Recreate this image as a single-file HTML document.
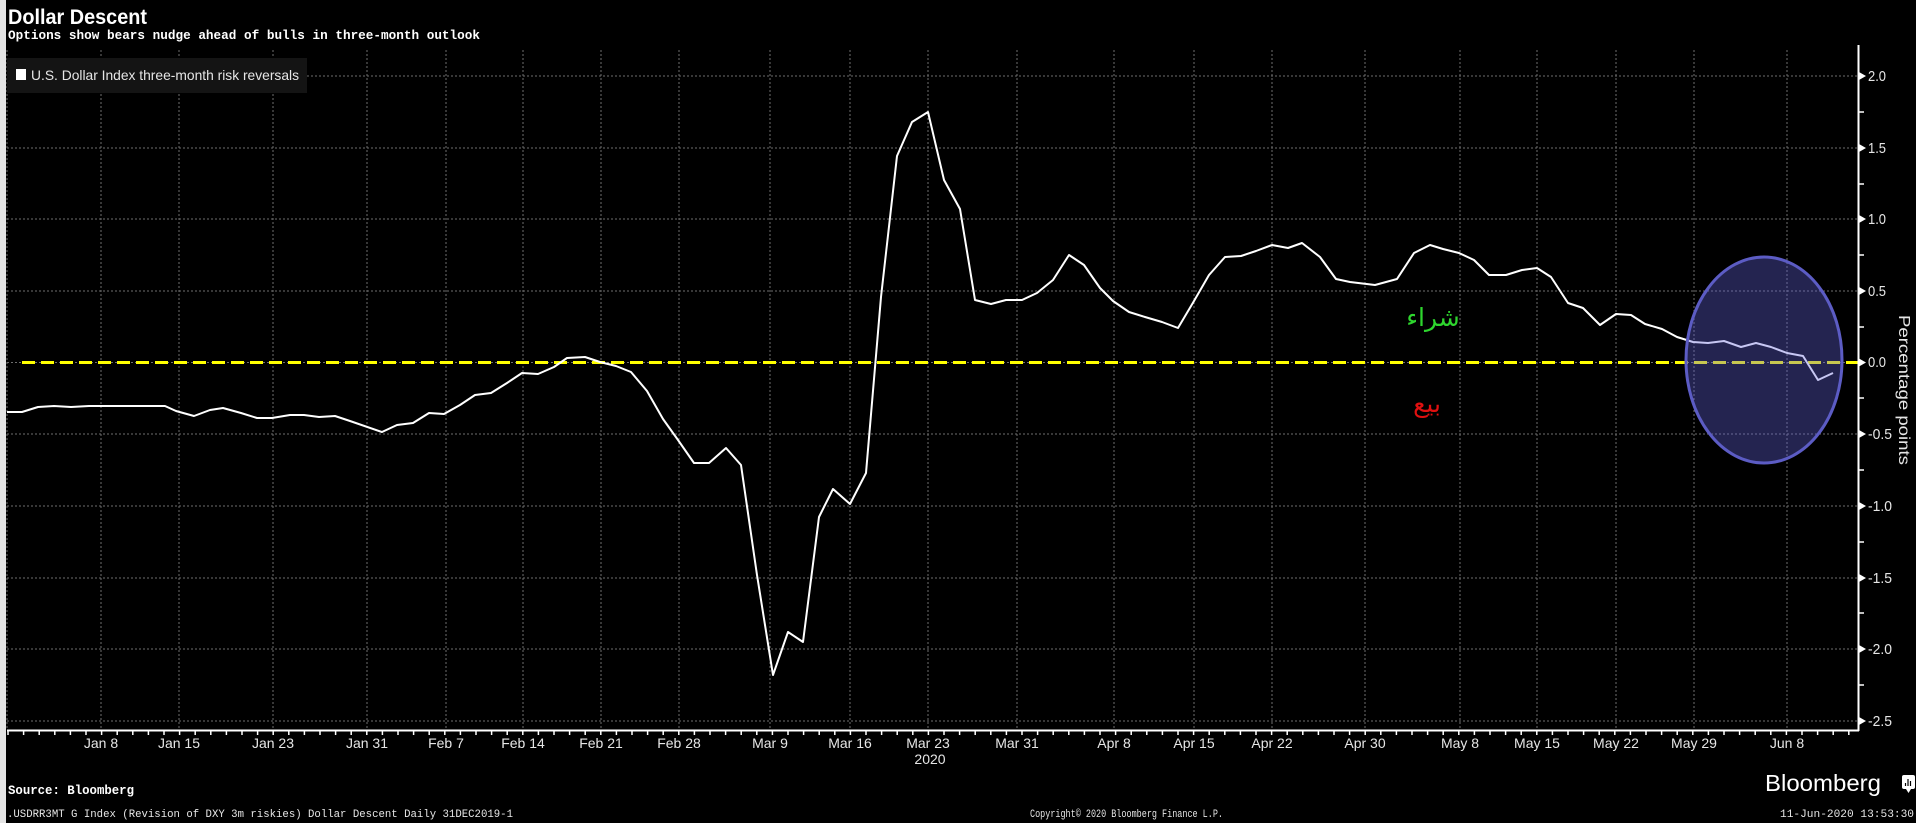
<!DOCTYPE html>
<html><head><meta charset="utf-8"><style>
html,body{margin:0;padding:0;background:#000;}
body{width:1916px;height:823px;overflow:hidden;position:relative;}
svg{position:absolute;left:0;top:0;}
.t{font-family:"Liberation Sans Narrow","Liberation Sans",sans-serif;fill:#e6e6e6;}
</style></head><body>
<svg width="1916" height="823" viewBox="0 0 1916 823" xmlns="http://www.w3.org/2000/svg">
<rect x="0" y="0" width="1916" height="823" fill="#000"/>
<rect x="0" y="0" width="6" height="823" fill="#e4e4e4"/>
<text x="8" y="24" font-family="Liberation Sans, sans-serif" font-weight="bold" font-size="21" fill="#fff" textLength="139" lengthAdjust="spacingAndGlyphs">Dollar Descent</text>
<text x="8" y="39" font-family="Liberation Mono, monospace" font-weight="bold" font-size="13" fill="#fff" textLength="472" lengthAdjust="spacingAndGlyphs">Options show bears nudge ahead of bulls in three-month outlook</text>
<g stroke="#6e6e6e" stroke-width="1" stroke-dasharray="2,2" fill="none">
<line x1="7" y1="50" x2="7" y2="730"/>
<line x1="101" y1="50" x2="101" y2="730"/><line x1="179" y1="50" x2="179" y2="730"/><line x1="273" y1="50" x2="273" y2="730"/><line x1="367" y1="50" x2="367" y2="730"/><line x1="446" y1="50" x2="446" y2="730"/><line x1="523" y1="50" x2="523" y2="730"/><line x1="601" y1="50" x2="601" y2="730"/><line x1="679" y1="50" x2="679" y2="730"/><line x1="770" y1="50" x2="770" y2="730"/><line x1="850" y1="50" x2="850" y2="730"/><line x1="928" y1="50" x2="928" y2="730"/><line x1="1017" y1="50" x2="1017" y2="730"/><line x1="1114" y1="50" x2="1114" y2="730"/><line x1="1194" y1="50" x2="1194" y2="730"/><line x1="1272" y1="50" x2="1272" y2="730"/><line x1="1365" y1="50" x2="1365" y2="730"/><line x1="1460" y1="50" x2="1460" y2="730"/><line x1="1537" y1="50" x2="1537" y2="730"/><line x1="1616" y1="50" x2="1616" y2="730"/><line x1="1694" y1="50" x2="1694" y2="730"/><line x1="1787" y1="50" x2="1787" y2="730"/>
<line x1="7" y1="76" x2="1858" y2="76"/><line x1="7" y1="148" x2="1858" y2="148"/><line x1="7" y1="219" x2="1858" y2="219"/><line x1="7" y1="291" x2="1858" y2="291"/><line x1="7" y1="434" x2="1858" y2="434"/><line x1="7" y1="506" x2="1858" y2="506"/><line x1="7" y1="578" x2="1858" y2="578"/><line x1="7" y1="649" x2="1858" y2="649"/><line x1="7" y1="721" x2="1858" y2="721"/>
</g>
<rect x="7" y="58" width="300" height="35" fill="#141414"/>
<rect x="16" y="69" width="10" height="11" fill="#fff"/>
<text x="31" y="80" class="t" font-size="14" textLength="268" lengthAdjust="spacingAndGlyphs">U.S. Dollar Index three-month risk reversals</text>
<line x1="7" y1="362.5" x2="1858" y2="362.5" stroke="#6e6e6e" stroke-dasharray="2,2"/>
<line x1="22" y1="362.5" x2="1858" y2="362.5" stroke="#ffff00" stroke-width="3" stroke-dasharray="13,6"/>
<polyline fill="none" stroke="#fff" stroke-width="2" stroke-linejoin="round" points="7,412 22,412 38,407 54,406 71,407 89,406 165,406 176,411 194,416 210,410 223,408 241,413 257,418 272,418 290,415 304,415 319,417 335,416 350,421 382,432 397,425 413,423 429,413 444,414 460,405 475,395 491,393 507,383 522,373 538,374 554,367 567,358 585,357 600,362 616,366 631,372 647,391 663,419 678,440 694,463 709,463 726,448 741,465 757,575 773,675 788,632 803,642 819,517 833,489 850,504 866,473 881,297 897,156 912,122 928,112 944,180 960,209 975,300 991,304 1006,300 1022,300 1037,293 1053,280 1069,255 1084,265 1100,288 1113,301 1129,312 1145,317 1162,322 1178,328 1194,301 1209,275 1225,257 1241,256 1256,251 1272,245 1288,248 1302,243 1320,257 1336,279 1350,282 1375,285 1397,279 1414,253 1430,245 1443,249 1459,253 1474,260 1489,275 1506,275 1522,270 1537,268 1551,277 1568,303 1583,308 1600,325 1616,314 1631,315 1645,324 1662,329 1677,337 1693,342 1708,343 1724,341 1741,347 1756,343 1771,347 1787,353 1803,356 1818,380 1833,373"/>
<ellipse cx="1764" cy="360" rx="78" ry="103" fill="rgba(101,101,221,0.36)" stroke="#5c5cc4" stroke-width="3"/>
<text x="1433" y="326" text-anchor="middle" font-family="DejaVu Sans, sans-serif" font-size="25" fill="#2ed62e">شراء</text>
<text x="1427" y="412" text-anchor="middle" font-family="DejaVu Sans, sans-serif" font-size="25" fill="#e01010">بيع</text>
<line x1="7" y1="730.5" x2="1859" y2="730.5" stroke="#fff" stroke-width="2"/>
<line x1="1858.5" y1="45" x2="1858.5" y2="731" stroke="#fff" stroke-width="2"/>
<g stroke="#fff" stroke-width="1.5" id="xt"></g>
<g fill="#fff">
<polygon points="1859,72 1866,76 1859,80"/><polygon points="1859,144 1866,148 1859,152"/><polygon points="1859,215 1866,219 1859,223"/><polygon points="1859,287 1866,291 1859,295"/><polygon points="1859,358.5 1866,362.5 1859,366.5"/><polygon points="1859,430 1866,434 1859,438"/><polygon points="1859,502 1866,506 1859,510"/><polygon points="1859,574 1866,578 1859,582"/><polygon points="1859,645 1866,649 1859,653"/><polygon points="1859,717 1866,721 1859,725"/>
</g>
<g stroke="#fff" stroke-width="1.5">
<line x1="1859" y1="112" x2="1864" y2="112"/><line x1="1859" y1="184" x2="1864" y2="184"/><line x1="1859" y1="255" x2="1864" y2="255"/><line x1="1859" y1="327" x2="1864" y2="327"/><line x1="1859" y1="398" x2="1864" y2="398"/><line x1="1859" y1="470" x2="1864" y2="470"/><line x1="1859" y1="542" x2="1864" y2="542"/><line x1="1859" y1="613" x2="1864" y2="613"/><line x1="1859" y1="685" x2="1864" y2="685"/>
</g>
<g class="t" font-size="15" lengthAdjust="spacingAndGlyphs">
<text x="1868" y="81" textLength="18" lengthAdjust="spacingAndGlyphs">2.0</text><text x="1868" y="153" textLength="18" lengthAdjust="spacingAndGlyphs">1.5</text><text x="1868" y="224" textLength="18" lengthAdjust="spacingAndGlyphs">1.0</text><text x="1868" y="296" textLength="18" lengthAdjust="spacingAndGlyphs">0.5</text><text x="1868" y="367" textLength="18" lengthAdjust="spacingAndGlyphs">0.0</text><text x="1868" y="439" textLength="24" lengthAdjust="spacingAndGlyphs">-0.5</text><text x="1868" y="511" textLength="24" lengthAdjust="spacingAndGlyphs">-1.0</text><text x="1868" y="583" textLength="24" lengthAdjust="spacingAndGlyphs">-1.5</text><text x="1868" y="654" textLength="24" lengthAdjust="spacingAndGlyphs">-2.0</text><text x="1868" y="726" textLength="24" lengthAdjust="spacingAndGlyphs">-2.5</text>
</g>
<text class="t" font-size="16" transform="translate(1899,390) rotate(90)" text-anchor="middle" textLength="150" lengthAdjust="spacingAndGlyphs">Percentage points</text>
<g class="t" font-size="14" text-anchor="middle">
<text x="101" y="748">Jan 8</text><text x="179" y="748">Jan 15</text><text x="273" y="748">Jan 23</text><text x="367" y="748">Jan 31</text><text x="446" y="748">Feb 7</text><text x="523" y="748">Feb 14</text><text x="601" y="748">Feb 21</text><text x="679" y="748">Feb 28</text><text x="770" y="748">Mar 9</text><text x="850" y="748">Mar 16</text><text x="928" y="748">Mar 23</text><text x="1017" y="748">Mar 31</text><text x="1114" y="748">Apr 8</text><text x="1194" y="748">Apr 15</text><text x="1272" y="748">Apr 22</text><text x="1365" y="748">Apr 30</text><text x="1460" y="748">May 8</text><text x="1537" y="748">May 15</text><text x="1616" y="748">May 22</text><text x="1694" y="748">May 29</text><text x="1787" y="748">Jun 8</text>
<text x="930" y="764">2020</text>
</g>
<text x="8" y="794" font-family="Liberation Mono, monospace" font-weight="bold" font-size="13" fill="#fff" textLength="126" lengthAdjust="spacingAndGlyphs">Source: Bloomberg</text>
<text x="7" y="817" font-family="Liberation Mono, monospace" font-size="11" fill="#e6e6e6" textLength="506" lengthAdjust="spacingAndGlyphs">.USDRR3MT G Index (Revision of DXY 3m riskies) Dollar Descent  Daily 31DEC2019-1</text>
<text x="1030" y="817" font-family="Liberation Mono, monospace" font-size="11" fill="#e6e6e6" textLength="193" lengthAdjust="spacingAndGlyphs">Copyright© 2020 Bloomberg Finance L.P.</text>
<text x="1780" y="817" font-family="Liberation Mono, monospace" font-size="11" fill="#e6e6e6" textLength="134" lengthAdjust="spacingAndGlyphs">11-Jun-2020 13:53:30</text>
<text x="1765" y="791" font-family="Liberation Sans, sans-serif" font-size="23" fill="#fff" textLength="116" lengthAdjust="spacingAndGlyphs">Bloomberg</text>
<rect x="1902" y="775" width="13" height="14" rx="2" fill="#fff"/>
<polygon points="1906,789 1911,789 1908.5,793" fill="#fff"/>
<g stroke="#000" stroke-width="1.2"><line x1="1905.5" y1="786" x2="1905.5" y2="783"/><line x1="1908" y1="786" x2="1908" y2="779"/><line x1="1910.5" y1="786" x2="1910.5" y2="781"/></g>
</svg>
<script>
var g=document.getElementById('xt');var s='';for(var x=8;x<1858;x+=15.6){s+='<line x1="'+x.toFixed(1)+'" y1="731" x2="'+x.toFixed(1)+'" y2="735"/>';}g.innerHTML=s;
</script>
</body></html>
